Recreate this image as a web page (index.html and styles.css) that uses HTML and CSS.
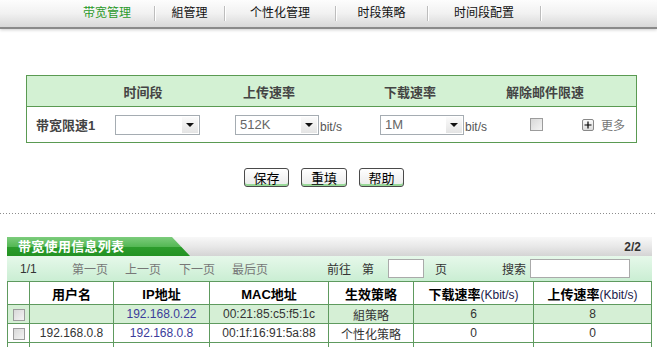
FILE: index.html
```html
<!DOCTYPE html>
<html lang="zh-CN">
  <head>
    <meta charset="UTF-8" />
    <title>带宽管理</title>
    <link rel="stylesheet" href="styles.css">
  </head>
  <body>
    <div class="topnav">
      <a class="nav-item active" style="width:94px">带宽管理</a><span class="sep"></span>
      <a class="nav-item" style="width:69px">組管理</a><span class="sep"></span>
      <a class="nav-item" style="width:110px">个性化管理</a><span class="sep"></span>
      <a class="nav-item" style="width:91px">时段策略</a><span class="sep"></span>
      <a class="nav-item" style="width:112px">时间段配置</a><span class="sep"></span>
    </div>

    <div class="limit">
      <div class="limit-head">
        <span class="h-blank"></span>
        <span class="h-time">时间段</span>
        <span class="h-up">上传速率</span>
        <span class="h-down">下载速率</span>
        <span class="h-mail">解除邮件限速</span>
      </div>
      <div class="limit-row">
        <div class="c-label">带宽限速1</div>
        <div class="c-time">
          <div class="select w85"><span class="val"></span><span class="arrow"><i></i></span></div>
        </div>
        <div class="c-up">
          <div class="select"><span class="val">512K</span><span class="arrow"><i></i></span></div>
          <span class="unit">bit/s</span>
        </div>
        <div class="c-down">
          <div class="select"><span class="val">1M</span><span class="arrow"><i></i></span></div>
          <span class="unit">bit/s</span>
        </div>
        <div class="c-mail"><span class="check"></span></div>
        <div class="c-more">
          <span class="plus"><svg width="10" height="10" viewBox="0 0 10 10"><path d="M5 1.5v7M1.5 5h7" stroke="#000" stroke-width="1.2"/></svg></span>
          <span class="more">更多</span>
        </div>
      </div>
    </div>

    <div class="actions">
      <button class="btn">保存</button>
      <button class="btn">重填</button>
      <button class="btn">帮助</button>
    </div>

    <div class="dotline"></div>

    <div class="list">
      <div class="list-title">
        <div class="tab">带宽使用信息列表</div>
        <div class="count">2/2</div>
      </div>
      <div class="pager">
        <span class="p-cur">1/1</span>
        <span class="p-link w53">第一页</span>
        <span class="p-link w54">上一页</span>
        <span class="p-link w53">下一页</span>
        <span class="p-link w95">最后页</span>
        <span class="w35">前往</span>
        <span class="w26">第</span>
        <span class="box page-box"></span>
        <span class="w67">页</span>
        <span class="w28">搜索</span>
        <span class="box search-box"></span>
      </div>
      <table class="grid">
        <colgroup>
          <col style="width:22px"><col style="width:84px"><col style="width:96px"><col style="width:119px">
          <col style="width:85px"><col style="width:120px"><col style="width:118px">
        </colgroup>
        <tr class="head">
          <th></th>
          <th>用户名</th>
          <th>IP地址</th>
          <th>MAC地址</th>
          <th>生效策略</th>
          <th>下载速率<span class="unit-h">(Kbit/s)</span></th>
          <th>上传速率<span class="unit-h">(Kbit/s)</span></th>
        </tr>
        <tr class="on">
          <td><span class="check small"></span></td>
          <td></td>
          <td class="ip">192.168.0.22</td>
          <td>00:21:85:c5:f5:1c</td>
          <td>組策略</td>
          <td>6</td>
          <td>8</td>
        </tr>
        <tr>
          <td><span class="check small"></span></td>
          <td>192.168.0.8</td>
          <td class="ip">192.168.0.8</td>
          <td>00:1f:16:91:5a:88</td>
          <td>个性化策略</td>
          <td>0</td>
          <td>0</td>
        </tr>
        <tr>
          <td></td><td></td><td></td><td></td><td></td><td></td><td></td>
        </tr>
      </table>
    </div>
  </body>
</html>
```

FILE: styles.css
```css
body {
  margin: 0;
  font-family: "Liberation Sans", "Noto Sans CJK SC", sans-serif;
  font-size: 12px;
  color: #333;
  background: #fff;
}

/* top navigation */
.topnav {
  display: flex;
  align-items: center;
  height: 27px;
  padding-left: 60px;
  background: linear-gradient(#fdfdfd, #f1f1f1 50%, #d8d8d8);
  border-bottom: 2px solid #8a8a8a;
  box-shadow: 0 1px 3px #cfcfcf;
}
.nav-item {
  display: block;
  text-align: center;
  font-size: 12px;
  color: #111;
  line-height: 27px;
  cursor: pointer;
}
.nav-item.active {
  color: #2a9a2a;
}
.sep {
  width: 1px;
  height: 15px;
  background: #bdbdbd;
  box-shadow: 1px 0 #fff;
}

/* bandwidth limit table */
.limit {
  width: 611px;
  box-sizing: border-box;
  margin: 46px 0 0 26px;
  border: 1px solid #5a9a52;
}
.limit-head {
  display: flex;
  align-items: center;
  height: 30px;
  background: #d3f1d3;
  border-bottom: 1px solid #5a9a52;
  font-size: 13px;
  font-weight: bold;
  color: #444;
}
.limit-head span { text-align: center; }
.h-blank { width: 78px; }
.h-time { width: 76px; }
.h-up { width: 176px; }
.h-down { width: 106px; }
.h-mail { width: 164px; }

.limit-row {
  display: flex;
  align-items: center;
  height: 35px;
  padding-left: 9px;
}
.c-label {
  width: 79px;
  font-size: 13px;
  font-weight: bold;
  color: #444;
}
.c-time { width: 120px; }
.c-up { width: 145px; display: flex; align-items: center; }
.c-down { width: 150px; display: flex; align-items: center; }
.c-mail { width: 52px; display: flex; }
.c-more { display: flex; align-items: center; }

.select {
  display: flex;
  width: 84px;
  height: 20px;
  box-sizing: border-box;
  border: 1px solid #a5acb2;
  background: #fff;
}
.select.w85 { width: 85px; }
.select .val {
  flex: 1;
  padding-left: 4px;
  font-size: 13px;
  line-height: 18px;
  color: #666;
}
.select .arrow {
  display: flex;
  align-items: center;
  justify-content: center;
  width: 16px;
  margin: 1px;
  background: linear-gradient(#fbfbfb, #e4e4e4);
}
.select .arrow i {
  border-left: 4px solid transparent;
  border-right: 4px solid transparent;
  border-top: 4px solid #111;
}
.unit {
  margin-left: 1px;
  padding-top: 4px;
  font-size: 12px;
  color: #555;
}

.check {
  display: inline-block;
  width: 13px;
  height: 13px;
  box-sizing: border-box;
  border: 1px solid #9c9c9c;
  background: linear-gradient(135deg, #d8d8d8, #f4f4f4);
}
.check.small {
  width: 12px;
  height: 12px;
  vertical-align: middle;
}
.plus {
  display: flex;
  align-items: center;
  justify-content: center;
  width: 12px;
  height: 12px;
  box-sizing: border-box;
  border: 1px solid #888;
  border-radius: 2px;
  background: linear-gradient(#fafafa, #dcdcdc);
}
.more {
  margin-left: 7px;
  font-size: 12px;
  color: #777;
}

/* buttons */
.actions {
  display: flex;
  justify-content: center;
  gap: 12px;
  margin-top: 25px;
  padding-right: 9px;
}
.btn {
  width: 45px;
  height: 19px;
  padding: 0;
  border: 1px solid #4a4a4a;
  border-radius: 3px;
  background: linear-gradient(#ffffff, #eeeeee 80%);
  box-shadow: inset 0 -2px #98d898;
  font-family: "Noto Sans CJK SC", sans-serif;
  font-size: 13px;
  line-height: 16px;
  color: #000;
}
.btn:nth-child(2) { width: 46px; }

.dotline {
  height: 1px;
  margin-top: 26px;
  background: linear-gradient(to right, #8c8c8c 1px, transparent 1px) repeat-x;
  background-size: 3px 1px;
}

/* usage list */
.list {
  width: 645px;
  margin: 23px 0 0 7px;
}
.list-title {
  display: flex;
  justify-content: space-between;
  align-items: center;
  height: 19px;
  background: linear-gradient(#f8f8f8, #e8e8e8 50%, #d4d4d4);
}
.tab {
  width: 172px;
  height: 19px;
  padding-left: 11px;
  clip-path: polygon(0 0, 165px 0, 100% 100%, 0 100%);
  background: linear-gradient(#7ccc7c, #55b855 50%, #2c9c2c 52%, #239223);
  color: #fff;
  font-size: 13px;
  font-weight: bold;
  line-height: 19px;
  letter-spacing: 0.3px;
}
.count {
  padding-right: 11px;
  font-weight: bold;
  color: #333;
}

.pager {
  display: flex;
  align-items: center;
  height: 25px;
  padding-left: 13px;
  background: linear-gradient(#e6f8ea, #caeed3);
  color: #333;
}
.pager span { flex: none; }
.p-cur { width: 52px; }
.p-link { color: #777; }
.w53 { width: 53px; }
.w54 { width: 54px; }
.w95 { width: 95px; }
.w35 { width: 35px; }
.w26 { width: 26px; }
.w67 { width: 67px; }
.w28 { width: 28px; }
.box {
  height: 19px;
  box-sizing: border-box;
  border: 1px solid #aaa;
  background: #fff;
}
.page-box { width: 36px; margin-right: 11px; }
.search-box { width: 100px; }

.grid {
  width: 645px;
  table-layout: fixed;
  border-collapse: collapse;
}
.grid th,
.grid td {
  border: 1px solid #5e9a5e;
  padding: 0;
  text-align: center;
  white-space: nowrap;
}
.grid th {
  height: 22px;
  font-size: 13px;
  font-weight: bold;
  color: #000;
}
.grid td {
  height: 18px;
  font-size: 12px;
  color: #333;
}
.grid tr.on td { background: #d5efd5; }
.grid td.ip { color: #3b3b9a; }
.unit-h {
  font-size: 12px;
  font-weight: normal;
  color: #1a1a4a;
}
```
